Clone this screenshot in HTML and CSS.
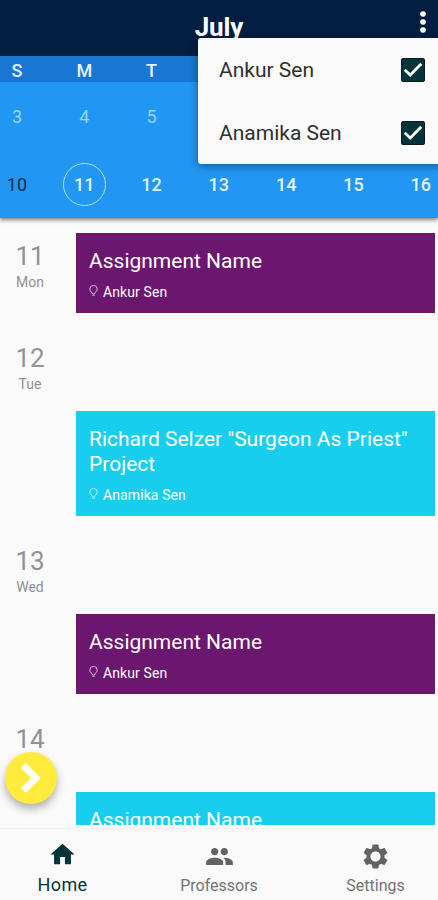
FILE: index.html
```html
<!DOCTYPE html>
<html lang="en">
<head>
<meta charset="utf-8">
<title>July</title>
<link rel="stylesheet" href="styles.css">
</head>
<body>
<svg class="defs" width="0" height="0">
  <symbol id="bulb" viewBox="0 0 9 12"><path d="M3 7.600C1.600 6.600.8 5.500.8 4.100a3.700 3.700 0 0 1 7.400 0c0 1.400-.8 2.500-2.200 3.500L5.500 9h-2z" fill="none" stroke="currentColor"/><path d="M3.300 10.200h2.400" stroke="currentColor"/></symbol>
  <symbol id="check" viewBox="0 0 24 24"><rect x=".5" y=".5" width="23" height="23" rx="1.500" fill="#03343a" stroke="#051d21"/><path d="M3.700 11.700 9.200 17 20.300 5.700" fill="none" stroke="#fff" stroke-width="2.700"/></symbol>
</svg>
<div class="app">
  <header class="bar">
    <h1>July</h1>
    <svg class="more" viewBox="0 0 6 22"><circle cx="3" cy="3" r="2.800"/><circle cx="3" cy="11" r="2.800"/><circle cx="3" cy="19" r="2.800"/></svg>
  </header>
  <section class="calendar">
    <div class="week names"><span>S</span><span>M</span><span>T</span></div>
    <div class="week past"><span>3</span><span>4</span><span>5</span></div>
    <div class="week"><span class="today">10</span><span><b class="selected">11</b></span><span>12</span><span>13</span><span>14</span><span>15</span><span>16</span></div>
  </section>
  <main class="agenda">
    <section class="day">
      <div class="date"><strong>11</strong><small>Mon</small></div>
      <article class="card purple"><h2>Assignment Name</h2><p><svg class="bulb"><use href="#bulb"/></svg>Ankur Sen</p></article>
    </section>
    <section class="day late">
      <div class="date"><strong>12</strong><small>Tue</small></div>
      <article class="card cyan"><h2>Richard Selzer "Surgeon As Priest" Project</h2><p><svg class="bulb"><use href="#bulb"/></svg>Anamika Sen</p></article>
    </section>
    <section class="day late">
      <div class="date"><strong>13</strong><small>Wed</small></div>
      <article class="card purple"><h2>Assignment Name</h2><p><svg class="bulb"><use href="#bulb"/></svg>Ankur Sen</p></article>
    </section>
    <section class="day late">
      <div class="date"><strong>14</strong></div>
      <article class="card cyan"><h2>Assignment Name</h2></article>
    </section>
  </main>
  <nav class="tabs">
    <a class="tab active"><svg viewBox="0 0 24 24"><path d="M10 20v-6h4v6h5v-8h3L12 3 2 12h3v8z"/></svg><span>Home</span></a>
    <a class="tab"><svg viewBox="0 0 24 24"><path d="M16 11c1.660 0 2.990-1.340 2.990-3S17.660 5 16 5s-3 1.340-3 3 1.340 3 3 3zm-8 0c1.660 0 2.990-1.340 2.990-3S9.660 5 8 5 5 6.340 5 8s1.340 3 3 3zm0 2c-2.330 0-7 1.170-7 3.500V19h14v-2.500C15 14.170 10.330 13 8 13zm8 0c-.29 0-.62.020-.97.050C16.190 13.890 17 15.020 17 16.500V19h6v-2.500c0-2.330-4.670-3.500-7-3.500z"/></svg><span>Professors</span></a>
    <a class="tab"><svg viewBox="0 0 24 24"><path d="M19.430 12.980c.040-.32.070-.64.070-.98s-.030-.66-.070-.98l2.110-1.650c.19-.15.240-.42.120-.64l-2-3.460c-.12-.22-.39-.3-.61-.22l-2.490 1c-.52-.4-1.080-.73-1.690-.98l-.38-2.650C14.460 2.180 14.250 2 14 2h-4c-.25 0-.46.180-.49.420l-.38 2.650c-.61.250-1.170.590-1.690.980l-2.490-1c-.23-.09-.49 0-.61.220l-2 3.460c-.13.220-.07.490.12.640l2.110 1.650c-.04.320-.07.650-.07.980s.030.660.070.980l-2.110 1.650c-.19.150-.24.420-.12.640l2 3.460c.12.220.39.300.61.220l2.490-1c.52.400 1.080.730 1.690.980l.38 2.650c.03.240.24.420.49.420h4c.25 0 .46-.18.49-.42l.38-2.650c.61-.25 1.170-.59 1.690-.98l2.490 1c.23.090.49 0 .61-.22l2-3.460c.12-.22.070-.49-.12-.64l-2.110-1.650zM12 16.200c-2.320 0-4.200-1.880-4.200-4.200s1.880-4.200 4.200-4.200 4.200 1.880 4.200 4.200-1.880 4.200-4.200 4.200z"/></svg><span>Settings</span></a>
  </nav>
  <div class="menu">
    <label><span>Ankur Sen</span><svg><use href="#check"/></svg></label>
    <label><span>Anamika Sen</span><svg><use href="#check"/></svg></label>
  </div>
  <button class="fab" aria-label="Next"><svg viewBox="0 0 22 32"><path d="M3.500 3.500 16 16 3.500 28.500" fill="none" stroke="#fff" stroke-width="6.800"/></svg></button>
</div>
</body>
</html>
```

FILE: styles.css
```css
* { box-sizing: border-box; }
body { margin: 0; font-family: Roboto, sans-serif; background: #fafafa; }
h1, h2, p { margin: 0; }
.defs { position: absolute; }
.app { position: relative; display: flex; flex-direction: column; width: 438px; height: 900px; overflow: hidden; }
.bar { position: relative; flex: none; height: 56px; display: flex; justify-content: center; background: #041e42; color: #fff; }
.bar h1 { font-size: 26px; line-height: 30px; margin-top: 12px; font-weight: 700; letter-spacing: -.1px; }
.more { position: absolute; left: 420px; top: 11px; width: 6px; height: 22px; fill: #fff; }
.calendar { flex: none; height: 162px; background: #2196f3; color: #e3f5ff; overflow: hidden; box-shadow: 0 2px 4px rgba(0,0,0,.5); }
.week { display: grid; grid-template-columns: repeat(7, 67.3px); width: 471px; margin-left: -16.700px; height: 68px; align-items: center; justify-items: center; font-size: 18px; font-weight: 500; }
.names { height: 26px; background: #1976d2; padding-top: 2px; }
.past { color: #9bd5fb; font-weight: 400; }
.today { color: #0c2b45; font-weight: 400; }
.selected { display: grid; place-items: center; width: 43px; height: 43px; border: 1.500px solid #b5e2ff; border-radius: 50%; font-weight: 500; }
.agenda { flex: none; height: 607px; padding-top: 15px; overflow: hidden; }
.day { display: grid; grid-template-columns: 76px 359px; align-items: start; margin-bottom: 22px; }
.late .card { margin-top: 76px; }
.date { display: flex; flex-direction: column; align-items: center; width: 60px; padding-top: 7px; color: #929292; }
.date strong { font-size: 26px; line-height: 32px; font-weight: 400; }
.date small { font-size: 14px; line-height: 20px; }
.card { padding: 16px 13px 12px; color: #fff; }
.card h2 { font-size: 21px; line-height: 25px; font-weight: 400; }
.card p { display: flex; align-items: center; margin-top: 9px; font-size: 14px; line-height: 18px; letter-spacing: .1px; }
.bulb { width: 9px; height: 12px; margin: -2px 5px 0 0; opacity: .7; }
.purple { background: #6c176f; }
.cyan { background: #17ceef; }
.tabs { flex: none; display: grid; grid-template-columns: 125px 188px 125px; height: 75px; padding-top: 3px; background: #fafafa; }
.tab { display: flex; flex-direction: column; align-items: center; padding-top: 13px; border-top: 1px solid #f1f1f1; color: #737373; font-size: 16px; }
.tab svg { width: 29px; height: 29px; fill: #626262; }
.tab span { line-height: 22px; margin-top: 4px; }
.active { color: #04353a; font-size: 18px; letter-spacing: .4px; }
.active svg { fill: #04353a; margin-top: -2px; margin-bottom: 1px; }
.menu { position: absolute; left: 198px; top: 38px; width: 244px; height: 126px; background: #fafafa; border-radius: 3px; box-shadow: 0 2px 8px rgba(0,0,0,.4); }
.menu label { display: flex; height: 63px; padding: 0 17px 0 21px; align-items: center; justify-content: space-between; color: #303030; font-size: 21px; }
.menu svg { width: 24px; height: 24px; }
.fab { position: absolute; left: 5px; top: 752px; width: 52px; height: 52px; padding: 0; border: 0; border-radius: 50%; background: #ffeb3b; display: grid; place-items: center; box-shadow: 0 5px 9px rgba(0,0,0,.3); }
.fab svg { width: 22px; height: 32px; }
```
